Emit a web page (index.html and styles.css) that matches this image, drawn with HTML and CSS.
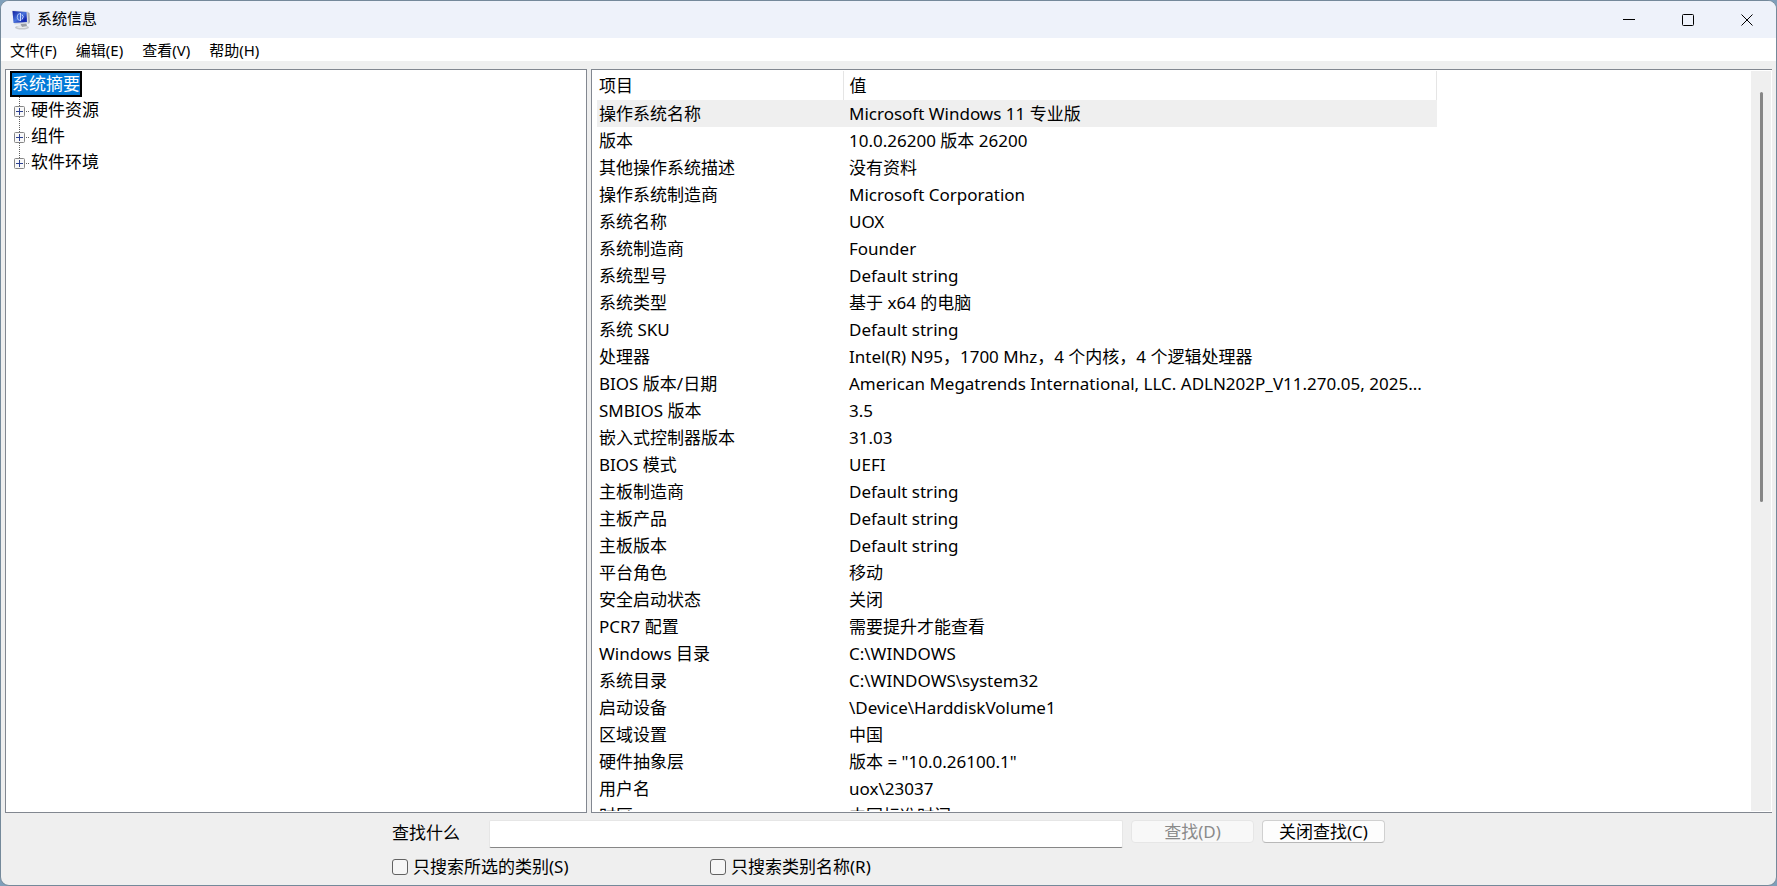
FILE: index.html
```html
<!DOCTYPE html>
<html lang="zh-CN">
<head>
    <meta charset="UTF-8">
    <meta name="viewport" content="width=device-width, initial-scale=1.0">
    <title>系统信息</title>
    <link rel="stylesheet" href="styles.css">
</head>
<body>
    <div class="window">
        <header class="titlebar">
            <svg class="app-icon" width="20" height="20" viewBox="0 0 20 20">
                <defs>
                    <linearGradient id="screen" x1="0" y1="0" x2="1" y2="1">
                        <stop offset="0" stop-color="#1020a0"/>
                        <stop offset="0.5" stop-color="#4a74dc"/>
                        <stop offset="0.8" stop-color="#1226b0"/>
                        <stop offset="1" stop-color="#2a48c8"/>
                    </linearGradient>
                </defs>
                <ellipse cx="11" cy="17.5" rx="7" ry="2" fill="#c4c7cb"/>
                <ellipse cx="11" cy="17" rx="5" ry="1" fill="#e8eaec"/>
                <path d="M9 13l6-1 1 4-5 1z" fill="#9a9ea5"/>
                <path d="M1 0.5l16 1 1.5 12-15 1z" fill="#d5d9df"/>
                <path d="M1.5 1l14 1 0.5 10-13.500 1z" fill="url(#screen)"/>
                <path d="M16.500 2l2 1 0.5 9-1.500 2z" fill="#a8adb5"/>
                <path d="M9 3.500a3 3.500 0 1 0 0.500 7" fill="none" stroke="#a9c3f5"/>
                <path d="M9.500 3v8M11 4.500q2.500 2 0 5" fill="none" stroke="#c8d8ff"/>
            </svg>
            <h1>系统信息</h1>
            <div class="window-buttons">
                <button type="button" aria-label="最小化"><svg width="12" height="12" viewBox="0 0 12 12"><path d="M0 5.5h12"/></svg></button>
                <button type="button" aria-label="最大化"><svg width="12" height="12" viewBox="0 0 12 12"><rect x="0.5" y="0.5" width="11" height="11" rx="1"/></svg></button>
                <button type="button" aria-label="关闭"><svg width="12" height="12" viewBox="0 0 12 12"><path d="M0.5 0.5l11 11M11.5 0.5l-11 11"/></svg></button>
            </div>
        </header>

        <nav class="menubar">
            <button type="button">文件(F)</button>
            <button type="button">编辑(E)</button>
            <button type="button">查看(V)</button>
            <button type="button">帮助(H)</button>
        </nav>

        <main class="panes">
            <section class="pane tree-pane">
                <div class="tree-root">系统摘要</div>
                <ul class="tree">
                    <li><svg class="expander" width="16" height="26" viewBox="0 0 16 26"><path class="dots" d="M5.5 0v26M12 14.5h4"/><rect x="0.5" y="9.5" width="10" height="10" rx="1"/><path class="plus" d="M2 14.5h7M5.5 11v7"/></svg>硬件资源</li>
                    <li><svg class="expander" width="16" height="26" viewBox="0 0 16 26"><path class="dots" d="M5.5 0v26M12 14.5h4"/><rect x="0.5" y="9.5" width="10" height="10" rx="1"/><path class="plus" d="M2 14.5h7M5.5 11v7"/></svg>组件</li>
                    <li><svg class="expander" width="16" height="26" viewBox="0 0 16 26"><path class="dots" d="M5.5 0v9M12 14.5h4"/><rect x="0.5" y="9.5" width="10" height="10" rx="1"/><path class="plus" d="M2 14.5h7M5.5 11v7"/></svg>软件环境</li>
                </ul>
            </section>

            <section class="pane list-pane">
                <div class="list">
                    <table>
                        <thead>
                            <tr><th class="col-item">项目</th><th class="col-value">值</th></tr>
                        </thead>
                        <tbody>
                            <tr class="selected"><td>操作系统名称</td><td>Microsoft Windows 11 专业版</td></tr>
                            <tr><td>版本</td><td>10.0.26200 版本 26200</td></tr>
                            <tr><td>其他操作系统描述</td><td>没有资料</td></tr>
                            <tr><td>操作系统制造商</td><td>Microsoft Corporation</td></tr>
                            <tr><td>系统名称</td><td>UOX</td></tr>
                            <tr><td>系统制造商</td><td>Founder</td></tr>
                            <tr><td>系统型号</td><td>Default string</td></tr>
                            <tr><td>系统类型</td><td>基于 x64 的电脑</td></tr>
                            <tr><td>系统 SKU</td><td>Default string</td></tr>
                            <tr><td>处理器</td><td>Intel(R) N95，1700 Mhz，4 个内核，4 个逻辑处理器</td></tr>
                            <tr><td>BIOS 版本/日期</td><td>American Megatrends International, LLC. ADLN202P_V11.270.05, 2025...</td></tr>
                            <tr><td>SMBIOS 版本</td><td>3.5</td></tr>
                            <tr><td>嵌入式控制器版本</td><td>31.03</td></tr>
                            <tr><td>BIOS 模式</td><td>UEFI</td></tr>
                            <tr><td>主板制造商</td><td>Default string</td></tr>
                            <tr><td>主板产品</td><td>Default string</td></tr>
                            <tr><td>主板版本</td><td>Default string</td></tr>
                            <tr><td>平台角色</td><td>移动</td></tr>
                            <tr><td>安全启动状态</td><td>关闭</td></tr>
                            <tr><td>PCR7 配置</td><td>需要提升才能查看</td></tr>
                            <tr><td>Windows 目录</td><td>C:\WINDOWS</td></tr>
                            <tr><td>系统目录</td><td>C:\WINDOWS\system32</td></tr>
                            <tr><td>启动设备</td><td>\Device\HarddiskVolume1</td></tr>
                            <tr><td>区域设置</td><td>中国</td></tr>
                            <tr><td>硬件抽象层</td><td>版本 = "10.0.26100.1"</td></tr>
                            <tr><td>用户名</td><td>uox\23037</td></tr>
                            <tr><td>时区</td><td>中国标准时间</td></tr>
                        </tbody>
                    </table>
                </div>
                <div class="scrollbar"><div class="thumb"></div></div>
            </section>
        </main>

        <form class="find">
            <div class="find-row">
                <label class="find-label" for="findText">查找什么</label>
                <input class="find-text" type="text" id="findText">
                <button class="find-button" type="button" disabled>查找(D)</button>
                <button class="find-button" type="button">关闭查找(C)</button>
            </div>
            <div class="check-row">
                <label class="check"><input type="checkbox">只搜索所选的类别(S)</label>
                <label class="check"><input type="checkbox">只搜索类别名称(R)</label>
            </div>
        </form>
    </div>
</body>
</html>
```
FILE: styles.css
```css
* {
    box-sizing: border-box;
}

body {
    margin: 0;
    background-color: #7f9fba;
    color: #000;
    font-family: "Noto Sans", "Noto Sans CJK SC", sans-serif;
    font-size: 17px;
}

button,
input {
    font-family: inherit;
    font-size: inherit;
    color: inherit;
}

.window {
    display: flex;
    flex-direction: column;
    height: 100vh;
    border: 1px solid #74899a;
    border-radius: 9px;
    background-color: #efefef;
    overflow: hidden;
}

/* Title bar */
.titlebar {
    display: flex;
    align-items: center;
    flex: none;
    height: 37px;
    padding-left: 10px;
    background-color: #eef2fa;
}

.titlebar h1 {
    flex: 1;
    margin: 0;
    padding: 0 0 3px 6px;
    font-size: 15px;
    font-weight: 400;
    line-height: 20px;
}

.window-buttons {
    display: flex;
}

.window-buttons button {
    display: flex;
    align-items: center;
    justify-content: center;
    width: 59px;
    height: 36px;
    padding: 0;
    border: 0;
    background: none;
}

.window-buttons svg {
    fill: none;
    stroke: #000;
}

/* Menu */
.menubar {
    display: flex;
    flex: none;
    height: 23px;
    padding-top: 1px;
    background-color: #fff;
}

.menubar button {
    padding: 0 10px 0 9px;
    border: 0;
    background: none;
    font-size: 15px;
    line-height: 22px;
}

/* Panes */
.panes {
    display: flex;
    flex: 1;
    gap: 4px;
    min-height: 0;
    padding: 8px 4px 0;
}

.pane {
    border: 1px solid #828790;
    background-color: #fff;
    overflow: hidden;
}

.tree-pane {
    flex: 0 0 582px;
    padding: 1px 4px;
}

.tree-root {
    width: max-content;
    height: 26px;
    border: 2px solid #000;
    background-color: #0078d7;
    color: #fff;
    line-height: 22px;
}

.tree {
    margin: 0;
    padding: 0 0 0 4px;
    list-style: none;
}

.tree li {
    display: flex;
    height: 26px;
    line-height: 26px;
}

.expander {
    margin-right: 1px;
    fill: #f8f8f8;
    stroke: #868686;
}

.expander .dots {
    stroke: #606060;
    stroke-dasharray: 1 1;
}

.expander .plus {
    stroke: #2c4090;
}

.list-pane {
    display: flex;
    flex: 1;
    border-right: 0;
    padding: 1px 1px 1px 5px;
    min-width: 0;
}

.list {
    flex: 1;
    overflow: hidden;
}

table {
    width: 840px;
    border-collapse: collapse;
    table-layout: fixed;
}

th,
td {
    height: 27px;
    padding: 0 2px;
    font-weight: 400;
    line-height: 27px;
    text-align: left;
    white-space: nowrap;
}

th {
    height: 29px;
    border-right: 1px solid #e5e5e5;
}

.col-item {
    width: 246px;
}

th + th,
td + td {
    padding-left: 6px;
}

.selected {
    background-color: #efefef;
}

.scrollbar {
    width: 20px;
    padding-top: 21px;
    background-color: #efefef;
}

.thumb {
    width: 3px;
    height: 57%;
    margin: 0 auto;
    border-radius: 2px;
    background-color: #868686;
}

/* Find */
.find {
    flex: none;
    width: 100%;
    max-width: 993px;
    margin: 0 auto;
    padding: 7px 0 6px;
}

.find-row {
    display: flex;
    align-items: flex-start;
    gap: 8px;
}

.find-label {
    width: 89px;
    line-height: 26px;
}

.find-text {
    flex: 1;
    height: 28px;
    min-width: 0;
    padding: 0 6px;
    border: 1px solid #e6e6e6;
    border-bottom-color: #868686;
    border-radius: 2px;
    background-color: #fff;
}

.find-button {
    width: 123px;
    height: 23px;
    padding: 0;
    border: 1px solid #d0d0d0;
    border-bottom-color: #b8b8b8;
    border-radius: 4px;
    background-color: #fdfdfd;
    line-height: 20px;
}

.find-button:disabled {
    border-color: #e6e6e6;
    background-color: #f8f8f8;
    color: #8a8a8a;
}

.check-row {
    display: flex;
    margin-top: 7px;
}

.check {
    display: flex;
    align-items: center;
    gap: 5px;
    width: 318px;
    line-height: 24px;
}

.check input {
    appearance: none;
    width: 16px;
    height: 16px;
    margin: 0;
    border: 1px solid #626262;
    border-radius: 3px;
    background-color: #f6f6f6;
}
```
